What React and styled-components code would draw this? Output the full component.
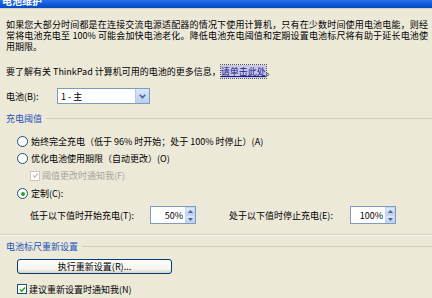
import styled, { createGlobalStyle } from "styled-components";

const GlobalStyle = createGlobalStyle`
  html, body {
    margin: 0;
    padding: 0;
    background: #ece9d8;
    overflow: hidden;
  }
  body {
    font-family: "Noto Sans CJK SC", "DejaVu Sans", sans-serif;
    font-size: 9px;
    color: #000;
  }
`;

const Window = styled.div`
  width: 432px;
  height: 298px;
  background: #ece9d8;
  overflow: hidden;
`;

const TitleBar = styled.div`
  height: 8px;
  overflow: hidden;
  background: linear-gradient(180deg, #2f6fe6 0%, #0a58d8 60%, #0848c0 100%);
  border-bottom: 1px solid #d9d5c3;
  > span {
    display: block;
    margin-top: -5px;
    margin-left: 2px;
    color: #fff;
    font-weight: 700;
    font-size: 10px;
    line-height: 12px;
  }
`;

const Body = styled.div`
  padding: 0 0 0 6px;
  display: flex;
  flex-direction: column;
`;

const Intro = styled.div`
  margin-top: 10px;
  width: 422px;
`;

const IntroLine = styled.div`
  line-height: 11px;
  white-space: nowrap;
  text-align: ${(p) => (p.$last ? "left" : "justify")};
  text-align-last: ${(p) => (p.$last ? "left" : "justify")};
`;

const Info = styled.p`
  margin: 14px 0 0;
  line-height: 11px;
`;

const Link = styled.span`
  color: #1c1c8a;
  background: #c9c6e8;
  text-decoration: underline;
  outline: 1px dotted #555;
`;

const Row = styled.div`
  display: flex;
  align-items: center;
  height: ${(p) => p.$h || 17}px;
  margin-top: ${(p) => p.$mt || 0}px;
  padding-left: ${(p) => p.$indent || 0}px;
  color: ${(p) => (p.$disabled ? "#a7a69a" : "#000")};
`;

const Label = styled.span`
  width: ${(p) => (p.$w ? p.$w + "px" : "auto")};
  margin-left: ${(p) => p.$ml || 0}px;
  white-space: nowrap;
`;

const Select = styled.div`
  width: 93px;
  height: 16px;
  background: #fff;
  border: 1px solid #7f9db9;
  display: flex;
  align-items: center;
  box-sizing: border-box;
  > span {
    flex: 1;
    padding-left: 3px;
  }
`;

const DropButton = styled.div`
  width: 13px;
  height: 14px;
  background: linear-gradient(180deg, #dbe6fb 0%, #b8cdf5 100%);
  border-left: 1px solid #b5c8f0;
  display: flex;
  align-items: center;
  justify-content: center;
`;

const GroupHeader = styled.div`
  display: flex;
  align-items: center;
  height: 12px;
  margin-top: ${(p) => p.$mt || 0}px;
  color: #1f50b8;
  &::after {
    content: "";
    flex: 1;
    margin-left: 4px;
    border-top: 1px solid #d0ccb8;
  }
`;

const Separator = styled.div`
  height: 0;
  margin-top: ${(p) => p.$mt || 0}px;
  margin-left: -6px;
  border-top: 1px solid #d6d2bf;
  border-bottom: 1px solid #f7f6f0;
`;

const Radio = styled.span`
  width: 9px;
  height: 9px;
  border-radius: 50%;
  border: 1px solid #1c5180;
  background: #fff;
  margin-right: 3px;
  display: inline-flex;
  align-items: center;
  justify-content: center;
  flex-shrink: 0;
  &::after {
    content: "";
    width: 4px;
    height: 4px;
    border-radius: 50%;
    background: ${(p) => (p.$checked ? "#2aa12e" : "transparent")};
  }
`;

const Check = styled.span`
  width: 8px;
  height: 8px;
  border: 1px solid ${(p) => (p.$disabled ? "#c9c7ba" : "#1c5180")};
  background: #fff;
  margin-right: 2px;
  display: inline-flex;
  align-items: center;
  justify-content: center;
  flex-shrink: 0;
`;

const Spin = styled.div`
  width: 46px;
  height: 18px;
  background: #fff;
  border: 1px solid #7f9db9;
  box-sizing: border-box;
  display: flex;
  align-items: center;
  > span {
    flex: 1;
    text-align: right;
    padding-right: 2px;
  }
`;

const SpinButtons = styled.div`
  width: 10px;
  height: 16px;
  display: flex;
  flex-direction: column;
  > div {
    flex: 1;
    background: linear-gradient(180deg, #dce7fb, #bcd0f6);
    border: 1px solid #c3d3f5;
    display: flex;
    align-items: center;
    justify-content: center;
  }
`;

const Button = styled.div`
  width: 155px;
  height: 15px;
  margin-left: 11px;
  margin-top: ${(p) => p.$mt || 0}px;
  border: 1px solid #003c74;
  border-radius: 3px;
  box-sizing: border-box;
  background: linear-gradient(180deg, #ffffff 0%, #f4f3ee 70%, #d8d4c6 100%);
  display: flex;
  align-items: center;
  justify-content: center;
`;

const CheckMark = ({ color }) => (
  <svg width="7" height="7" viewBox="0 0 7 7">
    <path d="M1 3.5 L2.8 5.3 L6 1.5" fill="none" stroke={color} strokeWidth="1.4" />
  </svg>
);

const Arrow = ({ up }) => (
  <svg width="5" height="3" viewBox="0 0 5 3">
    <path d={up ? "M0 3 L2.5 0 L5 3Z" : "M0 0 L2.5 3 L5 0Z"} fill="#4d6185" />
  </svg>
);

const SpinBox = ({ value }) => (
  <Spin>
    <span>{value}</span>
    <SpinButtons>
      <div>
        <Arrow up />
      </div>
      <div>
        <Arrow />
      </div>
    </SpinButtons>
  </Spin>
);

export default function App() {
  return (
    <Window>
      <GlobalStyle />
      <TitleBar>
        <span>电池维护</span>
      </TitleBar>
      <Body>
        <Intro>
          <IntroLine>
            如果您大部分时间都是在连接交流电源适配器的情况下使用计算机，只有在少数时间使用电池电能，则经
          </IntroLine>
          <IntroLine>
            常将电池充电至 100% 可能会加快电池老化。降低电池充电阈值和定期设置电池标尺将有助于延长电池使
          </IntroLine>
          <IntroLine $last>用期限。</IntroLine>
        </Intro>
        <Info>
          要了解有关 ThinkPad 计算机可用的电池的更多信息，<Link>请单击此处</Link>。
        </Info>
        <Row $h={16} $mt={11}>
          <Label $w={51}>电池(B):</Label>
          <Select>
            <span>1 - 主</span>
            <DropButton>
              <svg width="7" height="5" viewBox="0 0 7 5">
                <path d="M0.8 0.8 L3.5 3.6 L6.2 0.8" fill="none" stroke="#4d6185" strokeWidth="1.5" />
              </svg>
            </DropButton>
          </Select>
        </Row>
        <GroupHeader $mt={8}>充电阈值</GroupHeader>
        <Row $mt={9} $indent={11}>
          <Radio />
          <Label>始终完全充电（低于 96% 时开始；处于 100% 时停止）(A)</Label>
        </Row>
        <Row $indent={11}>
          <Radio />
          <Label>优化电池使用期限（自动更改）(O)</Label>
        </Row>
        <Row $indent={24} $disabled>
          <Check $disabled>
            <CheckMark color="#c4c2b4" />
          </Check>
          <Label>阈值更改时通知我(F)</Label>
        </Row>
        <Row $h={19} $indent={11}>
          <Radio $checked />
          <Label>定制(C):</Label>
        </Row>
        <Row $h={20} $mt={2} $indent={24}>
          <Label $w={120}>低于以下值时开始充电(T):</Label>
          <SpinBox value="50%" />
          <Label $w={121} $ml={33}>处于以下值时停止充电(E):</Label>
          <SpinBox value="100%" />
        </Row>
        <Separator $mt={9} />
        <GroupHeader $mt={4}>电池标尺重新设置</GroupHeader>
        <Button $mt={7}>执行重新设置(R)...</Button>
        <Row $h={18} $mt={6} $indent={11}>
          <Check>
            <CheckMark color="#21a121" />
          </Check>
          <Label>建议重新设置时通知我(N)</Label>
        </Row>
      </Body>
    </Window>
  );
}
